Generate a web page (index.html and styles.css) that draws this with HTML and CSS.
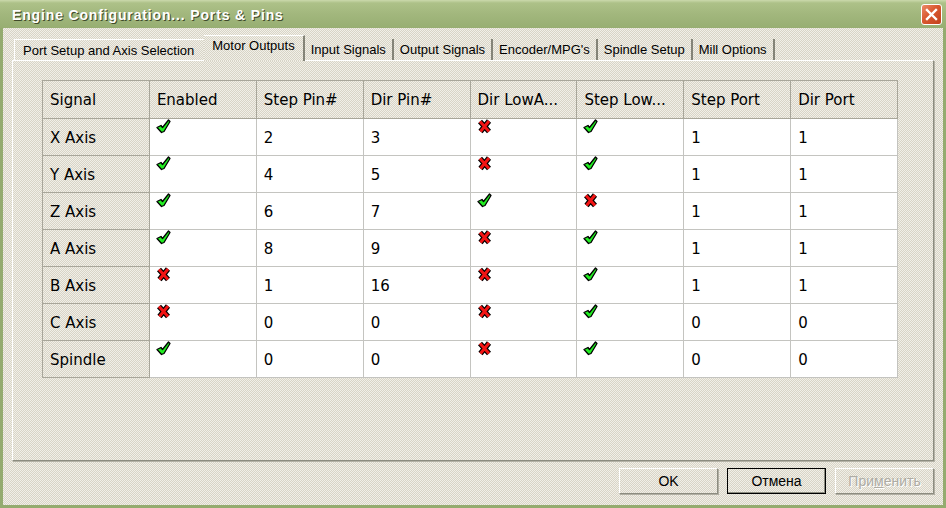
FILE: index.html
```html
<!doctype html>
<html lang="en">
<head>
	<meta charset="UTF-8" />
	<title>Engine Configuration... Ports &amp; Pins</title>
<link rel="stylesheet" href="styles.css">
</head>
<body>
	<section class="window">
		<div class="titlebar">
			<span class="title">Engine Configuration... Ports &amp; Pins</span>
			<a href="javascript:;" class="close">
				<svg width="13" height="13" viewBox="0 0 13 13"><path d="M2 2 L11 11 M11 2 L2 11" stroke="#fff" stroke-width="2.4" stroke-linecap="square"/></svg>
			</a>
		</div>
		<div class="body">
			<nav class="tabs">
				<a href="javascript:;" class="first">Port Setup and Axis Selection</a>
				<a href="javascript:;" class="active">Motor Outputs</a>
				<a href="javascript:;">Input Signals</a>
				<a href="javascript:;">Output Signals</a>
				<a href="javascript:;">Encoder/MPG's</a>
				<a href="javascript:;">Spindle Setup</a>
				<a href="javascript:;">Mill Options</a>
			</nav>
			<div class="panel">
				<table class="grid">
					<thead>
						<tr>
							<th>Signal</th>
							<th>Enabled</th>
							<th>Step Pin#</th>
							<th>Dir Pin#</th>
							<th>Dir LowA...</th>
							<th>Step Low...</th>
							<th>Step Port</th>
							<th>Dir Port</th>
						</tr>
					</thead>
					<tbody id="rows"></tbody>
				</table>
			</div>
			<div class="buttons">
				<a href="javascript:;" class="btn">OK</a>
				<a href="javascript:;" class="btn default">Отмена</a>
				<a href="javascript:;" class="btn disabled">При<u>м</u>енить</a>
			</div>
		</div>
	</section>
	<script>
		// signal, enabled, step pin, dir pin, dir low, step low, step port, dir port
		let data = [
			['X Axis', 1, 2, 3, 0, 1, 1, 1],
			['Y Axis', 1, 4, 5, 0, 1, 1, 1],
			['Z Axis', 1, 6, 7, 1, 0, 1, 1],
			['A Axis', 1, 8, 9, 0, 1, 1, 1],
			['B Axis', 0, 1, 16, 0, 1, 1, 1],
			['C Axis', 0, 0, 0, 0, 1, 0, 0],
			['Spindle', 1, 0, 0, 0, 1, 0, 0]
		];

		let yes = '<svg width="15" height="15" viewBox="0 0 15 15"><polygon points="1,8.5 5,6.5 6.5,8.5 12.5,1 14,2.5 8,12.5 5.5,13.5" fill="#22ee22" stroke="#000" stroke-width="1.3" stroke-linejoin="round"/></svg>';
		let no = '<svg width="15" height="15" viewBox="0 0 15 15"><path d="M3 2.5 L12 12.5 M12 2 L3.5 12.5" stroke="#000" stroke-width="5.4"/><path d="M3 2.5 L12 12.5 M12 2 L3.5 12.5" stroke="#f21414" stroke-width="3"/></svg>';

		function flag(v){
			return `<td class="icon">${v ? yes : no}</td>`;
		}

		let html = data.map(row => {
			return `
				<tr>
					<th>${row[0]}</th>
					${flag(row[1])}
					<td>${row[2]}</td>
					<td>${row[3]}</td>
					${flag(row[4])}
					${flag(row[5])}
					<td>${row[6]}</td>
					<td>${row[7]}</td>
				</tr>
			`
		}).join('');

		document.querySelector('#rows').innerHTML = html;
	</script>
</body>
</html>
```

FILE: styles.css
```css
body{
	margin: 0;
	padding: 0;
}
.window{
	width: 946px;
	height: 508px;
	background: #94ab6f;
	display: flex;
	flex-direction: column;
	font-family: "Liberation Sans", Arial, sans-serif;
}
.titlebar{
	height: 28px;
	flex: none;
	display: flex;
	align-items: center;
	justify-content: space-between;
	padding: 0 4px 0 12px;
	background: linear-gradient(#cbd9ac 0, #adc188 3px, #a2b77d 50%, #97ae72 100%);
}
.title{
	font-size: 14px;
	font-weight: bold;
	color: #fff;
	letter-spacing: 0.85px;
	text-shadow: 1px 1px 0 #3f4a2a;
	margin-top: 2px;
}
.close{
	width: 19px;
	height: 19px;
	display: flex;
	align-items: center;
	justify-content: center;
	border: 1px solid #fff;
	border-radius: 3px;
	background: linear-gradient(135deg, #ec8a68 0, #d9582f 45%, #c2421e 100%);
	margin-top: 1px;
}

.body{
	flex: 1;
	margin: 0 3px 3px;
	display: flex;
	flex-direction: column;
	background: repeating-conic-gradient(#f1efe8 0 25%, #d8d4c6 0 50%) 0 0 / 2px 2px;
}

.tabs{
	height: 32px;
	flex: none;
	display: flex;
	align-items: flex-end;
	padding-left: 11px;
	position: relative;
	z-index: 1;
}
.tabs a{
	display: block;
	height: 21px;
	line-height: 21px;
	padding: 0 6px 0 6px;
	font-size: 13px;
	color: #000;
	text-decoration: none;
	border-right: 2px solid #848478;
}
.tabs a.first{
	padding: 0 10px 0 8px;
	border-left: 1px solid #fff;
	border-top: 1px solid #fff;
	border-right: none;
	height: 20px;
}
.tabs a.active{
	height: 25px;
	line-height: 19px;
	margin: 0 0 -1px 0;
	padding: 0 8px 0 8px;
	border-top: 1px solid #fff;
	border-right: 2px solid #848478;
	background: repeating-conic-gradient(#f1efe8 0 25%, #d8d4c6 0 50%) 0 0 / 2px 2px;
}

.panel{
	height: 399px;
	flex: none;
	margin: 0 9px 0 9px;
	border-top: 1px solid #fff;
	border-left: 1px solid #fff;
	border-right: 1px solid #8c8c80;
	border-bottom: 1px solid #8c8c80;
	box-shadow: 1px 1px 0 #b4b2a6;
}

.grid{
	margin: 19px 0 0 29px;
	width: 856px;
	table-layout: fixed;
	border-collapse: collapse;
	font-family: "DejaVu Sans", Verdana, sans-serif;
	font-size: 15px;
	color: #000;
	border: 1px solid #9c9a8c;
}
.grid th, .grid td{
	border: 1px solid #c4c4c0;
	padding: 0 0 0 7px;
	text-align: left;
	font-weight: normal;
	height: 36px;
	vertical-align: middle;
}
.grid thead th{
	height: 37px;
	border-color: #a8a69a;
}
.grid tbody th{
	border-color: #a8a69a;
	padding-top: 1px;
	height: 35px;
}
.grid td{
	background: #fff;
	padding-top: 2px;
	height: 34px;
}
.grid td.icon{
	vertical-align: top;
	padding: 0 0 0 6px;
	height: 36px;
}
.grid td.icon svg{
	display: block;
}

.buttons{
	flex: none;
	display: flex;
	justify-content: flex-end;
	gap: 9px;
	margin: 7px 9px 0 0;
}
.btn{
	display: block;
	width: 97px;
	height: 24px;
	line-height: 24px;
	text-align: center;
	font-size: 14px;
	color: #000;
	text-decoration: none;
	border-top: 1px solid #fff;
	border-left: 1px solid #fff;
	border-right: 1px solid #8c8c80;
	border-bottom: 1px solid #8c8c80;
	box-shadow: 1px 1px 0 #b0aea2;
}
.btn.default{
	border: 1px solid #000;
	box-shadow: inset -1px -1px 0 #8c8c80;
}
.btn.disabled{
	color: #aeaca4;
	text-shadow: 1px 1px 0 #fff;
}
```
